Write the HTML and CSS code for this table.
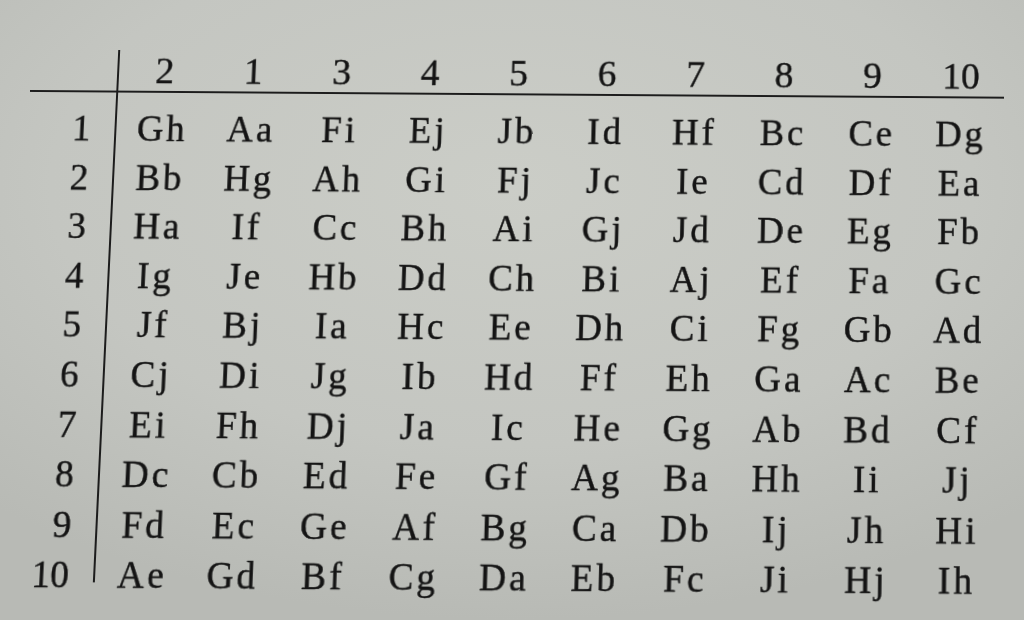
FILE: index.html
```html
<!DOCTYPE html>
<html>
<head>
<meta charset="utf-8">
<link rel="stylesheet" href="styles.css">
</head>
<body>
<div class="page">
  <div class="table">
    <div class="head">
      <div class="corner"></div>
      <div class="hcells">
        <span>2</span><span>1</span><span>3</span><span>4</span><span>5</span><span>6</span><span>7</span><span>8</span><span>9</span><span>10</span>
      </div>
    </div>
    <div class="body">
      <div class="labels">
        <span>1</span><span>2</span><span>3</span><span>4</span><span>5</span><span>6</span><span>7</span><span>8</span><span>9</span><span>10</span>
      </div>
      <div class="cells">
        <span>Gh</span><span>Aa</span><span>Fi</span><span>Ej</span><span>Jb</span><span>Id</span><span>Hf</span><span>Bc</span><span>Ce</span><span>Dg</span>
        <span>Bb</span><span>Hg</span><span>Ah</span><span>Gi</span><span>Fj</span><span>Jc</span><span>Ie</span><span>Cd</span><span>Df</span><span>Ea</span>
        <span>Ha</span><span>If</span><span>Cc</span><span>Bh</span><span>Ai</span><span>Gj</span><span>Jd</span><span>De</span><span>Eg</span><span>Fb</span>
        <span>Ig</span><span>Je</span><span>Hb</span><span>Dd</span><span>Ch</span><span>Bi</span><span>Aj</span><span>Ef</span><span>Fa</span><span>Gc</span>
        <span>Jf</span><span>Bj</span><span>Ia</span><span>Hc</span><span>Ee</span><span>Dh</span><span>Ci</span><span>Fg</span><span>Gb</span><span>Ad</span>
        <span>Cj</span><span>Di</span><span>Jg</span><span>Ib</span><span>Hd</span><span>Ff</span><span>Eh</span><span>Ga</span><span>Ac</span><span>Be</span>
        <span>Ei</span><span>Fh</span><span>Dj</span><span>Ja</span><span>Ic</span><span>He</span><span>Gg</span><span>Ab</span><span>Bd</span><span>Cf</span>
        <span>Dc</span><span>Cb</span><span>Ed</span><span>Fe</span><span>Gf</span><span>Ag</span><span>Ba</span><span>Hh</span><span>Ii</span><span>Jj</span>
        <span>Fd</span><span>Ec</span><span>Ge</span><span>Af</span><span>Bg</span><span>Ca</span><span>Db</span><span>Ij</span><span>Jh</span><span>Hi</span>
        <span>Ae</span><span>Gd</span><span>Bf</span><span>Cg</span><span>Da</span><span>Eb</span><span>Fc</span><span>Ji</span><span>Hj</span><span>Ih</span>
      </div>
    </div>
  </div>
</div>
</body>
</html>
```

FILE: styles.css
```css
html, body {
  margin: 0;
  padding: 0;
}
body {
  width: 1024px;
  height: 620px;
  overflow: hidden;
  background: radial-gradient(ellipse 75% 70% at 50% 30%, #cbcdc7 0%, #c4c6c1 60%, #b8bab5 100%);
  font-family: "Liberation Serif", "DejaVu Serif", serif;
  color: #141414;
  -webkit-text-stroke: 0.4px #141414;
}
.page {
  width: 1024px;
  height: 620px;
  padding-top: 52px;
  box-sizing: border-box;
}
.table {
  margin-left: 18px;
  width: 984px;
  font-size: 37px;
  letter-spacing: 3px;
  transform-origin: right center;
  transform: perspective(1000px) rotateX(2.6deg) rotate(0.4deg);
}
.head {
  display: flex;
  border-bottom: 2px solid #1c1c1c;
}
.corner {
  width: 92px;
  border-right: 2px solid #1c1c1c;
  box-sizing: border-box;
}
.hcells {
  display: grid;
  grid-template-columns: repeat(10, 89.5px);
  line-height: 42px;
  font-size: 38px;
  letter-spacing: 0;
}
.hcells span,
.cells span {
  text-align: center;
  padding-left: 3px;
}
.body {
  display: flex;
  align-items: flex-start;
}
.labels {
  width: 92px;
  box-sizing: border-box;
  height: 490px;
  padding-top: 12px;
  padding-right: 24px;
  border-right: 2px solid #1c1c1c;
  display: flex;
  flex-direction: column;
  align-items: flex-end;
  line-height: 49.6px;
  font-size: 37px;
}
.labels span {
  letter-spacing: 0;
}
.cells {
  display: grid;
  grid-template-columns: repeat(10, 89.5px);
  grid-auto-rows: 49.6px;
  padding-top: 12px;
  line-height: 49.6px;
}
```
